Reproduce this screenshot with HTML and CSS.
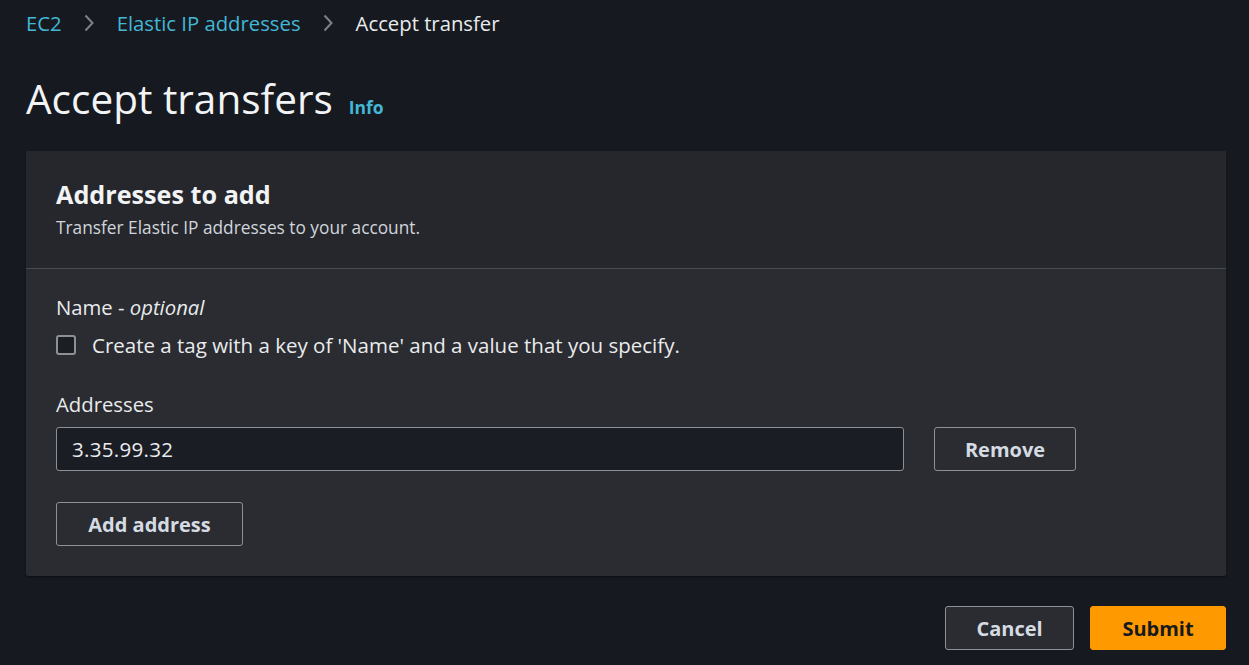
FILE: index.html
```html
<!DOCTYPE html>
<html lang="en">
<head>
<meta charset="utf-8">
<title>Accept transfers</title>
<link rel="stylesheet" href="styles.css">
</head>
<body>
<div class="page">
  <nav class="crumbs">
    <a class="crumb-link" href="#">EC2</a>
    <svg class="chev" width="14" height="20" viewBox="0 0 14 20"><path d="M3.5 2.5 L10.5 10 L3.5 17.5" fill="none" stroke="#7d8188" stroke-width="2"/></svg>
    <a class="crumb-link" href="#">Elastic IP addresses</a>
    <svg class="chev" width="14" height="20" viewBox="0 0 14 20"><path d="M3.5 2.5 L10.5 10 L3.5 17.5" fill="none" stroke="#7d8188" stroke-width="2"/></svg>
    <span class="crumb-current">Accept transfer</span>
  </nav>

  <header class="title-row">
    <h1 class="title">Accept transfers</h1>
    <a class="info" href="#">Info</a>
  </header>

  <section class="card">
    <div class="card-head">
      <h2 class="card-title">Addresses to add</h2>
      <p class="card-desc">Transfer Elastic IP addresses to your account.</p>
    </div>
    <div class="card-body">
      <div class="field">
        <div class="label">Name - <em>optional</em></div>
        <label class="check-row">
          <span class="checkbox"></span>
          <span>Create a tag with a key of 'Name' and a value that you specify.</span>
        </label>
      </div>
      <div class="field">
        <div class="label">Addresses</div>
        <div class="addr-row">
          <div class="input">3.35.99.32</div>
          <button class="btn btn-remove">Remove</button>
        </div>
      </div>
      <button class="btn btn-add">Add address</button>
    </div>
  </section>

  <footer class="actions">
    <button class="btn btn-cancel">Cancel</button>
    <button class="btn btn-primary">Submit</button>
  </footer>
</div>
</body>
</html>
```

FILE: styles.css
```css
* { box-sizing: border-box; }
html, body { margin: 0; padding: 0; }
body {
  background: #161a20;
  color: #e9ebed;
  font-family: "Open Sans", "Noto Sans", sans-serif;
  width: 1249px;
  height: 665px;
  overflow: hidden;
}
.page {
  padding: 0 23px 0 26px;
}
.crumbs {
  display: flex;
  align-items: center;
  height: 45px;
  font-size: 20.3px;
}
.crumb-link {
  color: #44b6d6;
  text-decoration: none;
}
.chev { margin: 0 21px 0 20px; }
.crumb-current { color: #e9ebed; }

.title-row {
  display: flex;
  align-items: baseline;
  margin-top: 28px;
  height: 52px;
}
.title {
  margin: 0;
  font-size: 40.5px;
  font-weight: 400;
  line-height: 52px;
  color: #f2f3f4;
}
.info {
  margin-left: 16px;
  font-size: 17.5px;
  font-weight: 700;
  color: #44b6d6;
  text-decoration: none;
}

.card {
  margin-top: 26px;
  background: #2a2c31;
  border-radius: 2px;
  box-shadow: 0 1px 2px rgba(0,0,0,0.5);
  height: 425px;
}
.card-head {
  background: #25272d;
  padding: 24px 30px 0;
  height: 118px;
  border-bottom: 1px solid #474b52;
}
.card-title {
  margin: 0;
  font-size: 25.2px;
  font-weight: 700;
  line-height: 38px;
  color: #f2f3f4;
}
.card-desc {
  margin: 0;
  font-size: 17.3px;
  line-height: 30px;
  color: #d1d5db;
}
.card-body {
  padding: 24px 30px 0;
}
.field { margin-bottom: 31px; }
.label {
  font-size: 20.3px;
  line-height: 28px;
  color: #e9ebed;
  margin-bottom: 10px;
}
.label em { font-style: italic; }
.check-row {
  display: flex;
  align-items: center;
  gap: 16px;
  font-size: 20.5px;
  line-height: 28px;
  color: #e9ebed;
}
.checkbox {
  width: 20px;
  height: 20px;
  border: 2px solid #8d9096;
  border-radius: 3px;
  background: #1b1e23;
}
.addr-row {
  display: flex;
  align-items: center;
  gap: 30px;
  margin-top: -1px;
}
.input {
  width: 848px;
  height: 44px;
  background: #1a1d23;
  border: 1px solid #8d9096;
  border-radius: 3px;
  padding: 0 15px;
  font-size: 20.5px;
  line-height: 42px;
  color: #e9ebed;
  letter-spacing: 0.3px;
}
.btn {
  font-family: "Open Sans", "Noto Sans", sans-serif;
  font-weight: 700;
  font-size: 20px;
  height: 44px;
  border-radius: 3px;
  border: 1px solid #8d9096;
  background: transparent;
  color: #d5dbe2;
  padding: 0;
}
.btn-remove { width: 142px; }
.btn-add { width: 187px; }

.actions {
  display: flex;
  justify-content: flex-end;
  gap: 16px;
  margin-top: 30px;
}
.btn-cancel {
  width: 129px;
  background: #2a2c31;
}
.btn-primary {
  width: 136px;
  background: #ff9900;
  border-color: #ff9900;
  color: #16191f;
}
```
